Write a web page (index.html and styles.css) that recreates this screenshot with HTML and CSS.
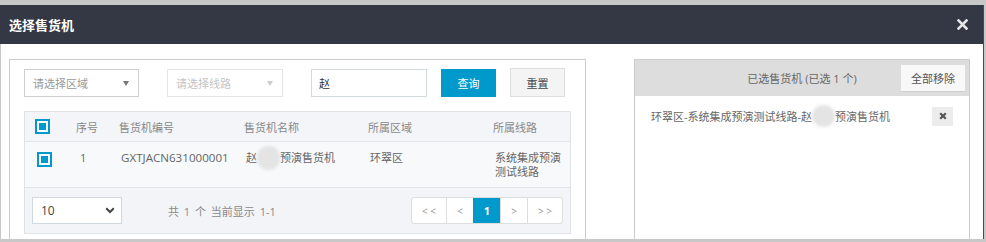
FILE: index.html
```html
<!DOCTYPE html>
<html lang="zh-CN">
<head>
<meta charset="utf-8">
<title>选择售货机</title>
<link rel="stylesheet" href="styles.css">
</head>
<body>
<div class="modal">
  <div class="modal-head">
    <span class="modal-title">选择售货机</span>
    <span class="close">
      <svg width="11" height="11" viewBox="0 0 11 11"><path d="M1.5 1.5 L9.5 9.5 M9.5 1.5 L1.5 9.5" stroke="#e6e6e6" stroke-width="2.6" stroke-linecap="square"/></svg>
    </span>
  </div>
  <div class="modal-body">
    <div class="panel panel-left">
      <div class="toolbar">
        <div class="select sel-area"><span>请选择区域</span><i class="caret"></i></div>
        <div class="select sel-line"><span>请选择线路</span><i class="caret"></i></div>
        <div class="input">赵</div>
        <span class="btn btn-primary">查询</span>
        <span class="btn btn-default">重置</span>
      </div>
      <div class="table">
        <div class="row row-head">
          <div class="cell"><span class="check"><i></i></span></div>
          <div class="cell">序号</div>
          <div class="cell">售货机编号</div>
          <div class="cell">售货机名称</div>
          <div class="cell">所属区域</div>
          <div class="cell">所属线路</div>
        </div>
        <div class="row row-data">
          <div class="cell"><span class="check"><i></i></span></div>
          <div class="cell cell-num">1</div>
          <div class="cell cell-code">GXTJACN631000001</div>
          <div class="cell">赵<span class="blur"></span>预演售货机</div>
          <div class="cell">环翠区</div>
          <div class="cell cell-route">系统集成预演测试线路</div>
        </div>
        <div class="foot">
          <div class="page-size"><span>10</span>
            <svg width="10" height="7" viewBox="0 0 10 7"><path d="M1.2 1.3 L5 5 L8.8 1.3" fill="none" stroke="#444" stroke-width="2"/></svg>
          </div>
          <span class="info">共 1 个 当前显示 1-1</span>
          <div class="pager">
            <span class="pg pg-w1">&lt; &lt;</span>
            <span class="pg pg-w2">&lt;</span>
            <span class="pg pg-w2 active">1</span>
            <span class="pg pg-w2">&gt;</span>
            <span class="pg pg-w3">&gt; &gt;</span>
          </div>
        </div>
      </div>
    </div>
    <div class="panel panel-right">
      <div class="sel-head">
        <span class="sel-title">已选售货机 (已选 1 个)</span>
        <span class="btn-remove-all">全部移除</span>
      </div>
      <div class="sel-item">
        <span class="sel-text">环翠区-系统集成预演测试线路-赵<span class="blur"></span>预演售货机</span>
        <span class="remove">
          <svg width="8" height="8" viewBox="0 0 8 8"><path d="M1.2 1.2 L6.8 6.8 M6.8 1.2 L1.2 6.8" stroke="#555" stroke-width="2.2"/></svg>
        </span>
      </div>
    </div>
  </div>
</div>
</body>
</html>
```
FILE: styles.css
```css
* { box-sizing: border-box; }
body {
  margin: 0;
  background: #c8c8c8;
  font-family: "Open Sans", "Noto Sans CJK SC", sans-serif;
  font-size: 11px;
  color: #666;
  overflow: hidden;
}
.modal {
  margin-top: 5px;
  width: 984px;
  height: 234px;
  display: flex;
  flex-direction: column;
  border-right: 1px solid #4a4a4a;
}
.modal-head {
  height: 39px;
  flex: none;
  background: #343844;
  display: flex;
  align-items: center;
  justify-content: space-between;
  padding: 0 15px 0 9px;
}
.modal-title {
  color: #fff;
  font-size: 13px;
  font-weight: 700;
  font-family: "Noto Sans CJK SC", sans-serif;
}
.close { display: flex; }
.modal-body {
  height: 195px;
  flex: none;
  background: #fff;
  border-left: 1px solid #c8c8c8;
  display: flex;
  align-items: flex-start;
  gap: 48px;
  padding: 15px 0 0 8px;
  overflow: hidden;
}
.panel {
  border: 1px solid #cccccc;
  height: 240px;
  flex: none;
}
.panel-left {
  width: 577px;
  padding: 9px 14px;
}
.toolbar {
  display: flex;
  height: 28px;
}
.select {
  width: 116px;
  height: 28px;
  border: 1px solid #cfcfcf;
  display: flex;
  align-items: center;
  justify-content: space-between;
  padding: 0 9px 0 8px;
  color: #999;
}
.sel-area { width: 115px; }
.sel-line {
  margin-left: 28px;
  border-color: #e4e4e4;
  color: #c4c4c4;
}
.caret {
  width: 0; height: 0;
  border-left: 3px solid transparent;
  border-right: 3px solid transparent;
  border-top: 5px solid #777;
}
.sel-line .caret { border-top-color: #cccccc; }
.input {
  margin-left: 28px;
  width: 116px;
  height: 28px;
  border: 1px solid #d2dadd;
  display: flex;
  align-items: center;
  padding-left: 7px;
  color: #333;
}
.btn {
  width: 55px;
  height: 28px;
  display: flex;
  align-items: center;
  justify-content: center;
  margin-left: 14px;
}
.btn-primary { background: #0099cc; color: #fff; }
.btn-default {
  background: #f4f4f4;
  border: 1px solid #dedede;
  color: #444;
  height: 29px;
  margin-top: -1px;
}
.table {
  margin-top: 14px;
  border: 1px solid #dfe3e8;
  width: 547px;
}
.row {
  display: grid;
  grid-template-columns: 41px 43px 125px 124px 125px 1fr;
}
.row-head {
  height: 30px;
  background: #f4f5f9;
  border-bottom: 1px solid #e1e5ea;
  align-items: center;
  color: #888;
}
.row-head .cell { padding-left: 10px; display: flex; align-items: center; }
.row-data {
  height: 46px;
  background: #f8f9fb;
  border-bottom: 1px solid #e1e5ea;
  padding-top: 9px;
  line-height: 14px;
}
.row-data .cell { padding-left: 12px; display: flex; align-items: flex-start; }
.row-data .cell-num { padding-left: 14px; }
.row-data .cell-code { font-size: 11.6px; }
.row-data .cell-route { display: block; padding-right: 4px; }
.check {
  width: 15px;
  height: 15px;
  border: 2px solid #0099cc;
  background: #fff;
  display: flex;
  align-items: center;
  justify-content: center;
}
.check i { width: 7px; height: 7px; background: #0099cc; }
.row-data .check { margin-top: 1px; }
.blur {
  display: inline-block;
  width: 23px;
  height: 24px;
  margin-top: -5px;
  border-radius: 11px;
  background: #e4e4e4;
  filter: blur(1.5px);
}
.foot {
  height: 45px;
  background: #f3f4f8;
  display: flex;
  align-items: center;
  padding: 0 7px;
}
.page-size {
  width: 90px;
  height: 27px;
  background: #fff;
  border: 1px solid #cfd8dc;
  display: flex;
  align-items: center;
  justify-content: space-between;
  padding: 0 6px 0 8px;
  font-size: 12px;
  color: #444;
}
.info { margin-left: 46px; color: #888; word-spacing: 2px; }
.pager {
  margin-left: auto;
  display: flex;
  height: 27px;
  border: 1px solid #dddddd;
  border-radius: 3px;
  background: #fff;
  overflow: hidden;
}
.pg {
  display: flex;
  align-items: center;
  justify-content: center;
  color: #999;
  border-left: 1px solid #dddddd;
  font-size: 10px;
}
.pg:first-child { border-left: none; }
.pg-w1 { width: 34px; }
.pg-w2 { width: 27px; }
.pg-w3 { width: 35px; }
.pg.active {
  background: #0099cc;
  color: #fff;
  font-weight: 700;
  font-size: 11px;
  border-left-color: #0099cc;
}
.panel-right {
  width: 336px;
}
.sel-head {
  height: 36px;
  background: #dddddd;
  display: grid;
  grid-template-columns: 1fr auto 1fr;
  align-items: center;
  padding-right: 4px;
}
.sel-title { grid-column: 2; color: #666; padding-left: 4px; }
.btn-remove-all {
  grid-column: 3;
  justify-self: end;
  width: 64px;
  height: 27px;
  background: #f8f8f8;
  border-bottom: 1px solid #cfcfcf;
  display: flex;
  align-items: center;
  justify-content: center;
  color: #555;
}
.sel-item {
  display: flex;
  align-items: center;
  justify-content: space-between;
  padding: 9px 16px 0 16px;
  color: #666;
}
.sel-text { display: flex; align-items: center; }
.sel-text .blur { margin-top: 0; height: 22px; }
.remove {
  width: 21px;
  height: 19px;
  background: #ececec;
  display: flex;
  align-items: center;
  justify-content: center;
}
```
